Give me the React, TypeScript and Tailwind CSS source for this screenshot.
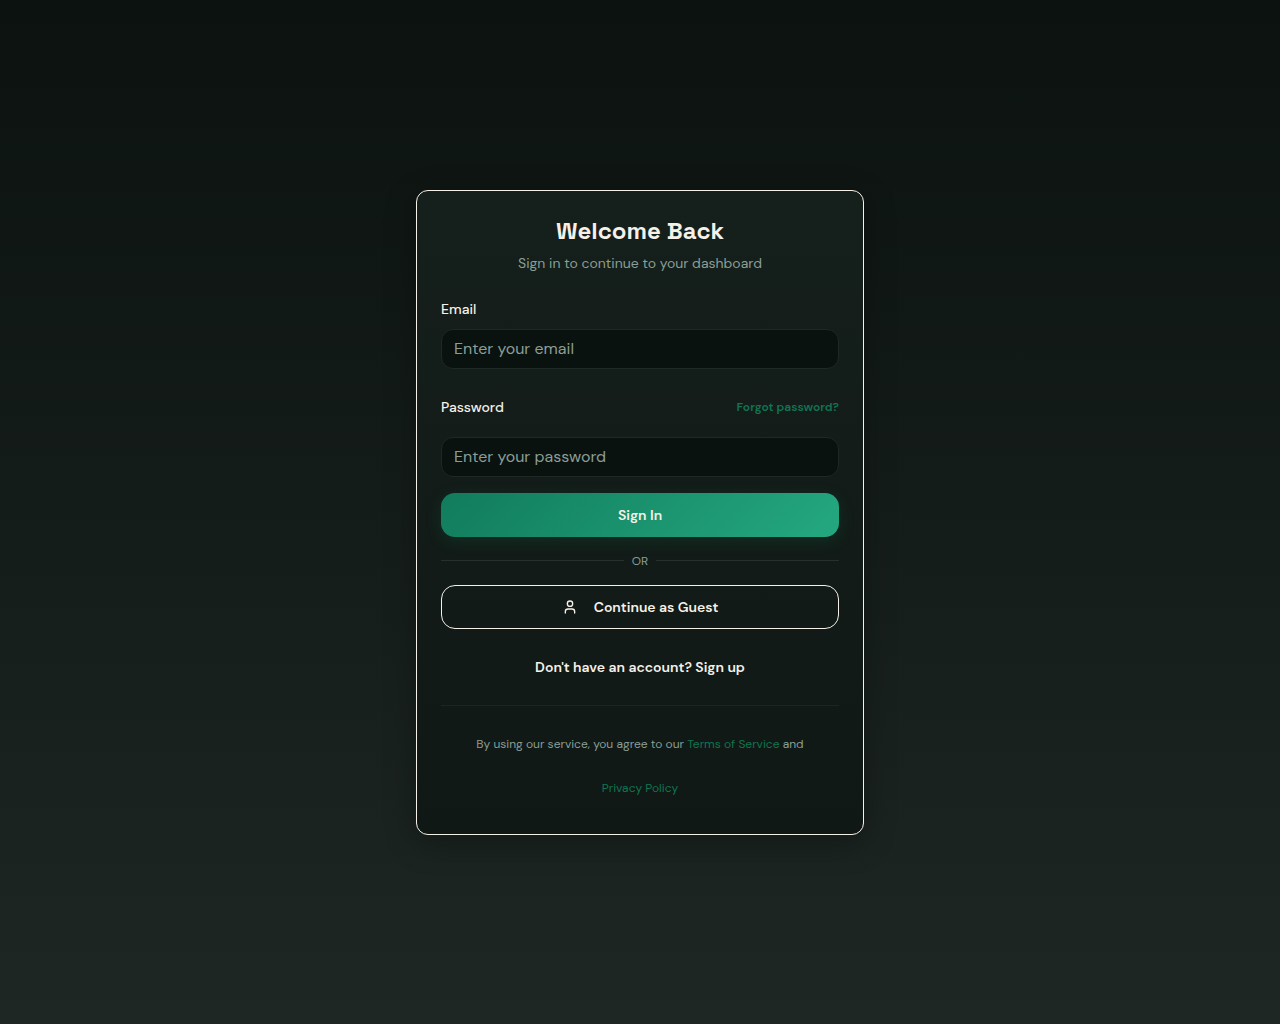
import { useState } from 'react';
import type { FormEvent } from 'react';
import { User } from 'lucide-react';

interface FieldProps {
  id: string;
  type: string;
  placeholder: string;
  value: string;
  onChange: (value: string) => void;
}

function Field({ id, type, placeholder, value, onChange }: FieldProps) {
  return (
    <input
      id={id}
      type={type}
      placeholder={placeholder}
      value={value}
      onChange={(e) => onChange(e.target.value)}
      className="h-10 w-full rounded-xl border border-[#1e2825] bg-[#0a120f] px-3 text-base text-[#f5f0e8] placeholder:text-[#8a9e96] focus:outline-none focus:ring-2 focus:ring-[#117c5c]"
    />
  );
}

export default function App() {
  const [email, setEmail] = useState('');
  const [password, setPassword] = useState('');

  const handleSubmit = (e: FormEvent) => {
    e.preventDefault();
  };

  return (
    <main className="flex min-h-screen items-center justify-center bg-linear-to-b from-[#0b1210] to-[#1e2724] p-4 font-['DM_Sans',Inter,sans-serif] text-[#f5f0e8]">
      <div className="w-full max-w-md rounded-xl border border-[#f5f0e8] bg-linear-to-b from-[#151f1b] to-[#101815] p-6 shadow-[0_8px_32px_rgba(0,0,0,0.3)]">
        <div className="mb-6 flex flex-col gap-1.5 text-center">
          <h1 className="font-['Space_Grotesk',Inter,sans-serif] text-2xl font-bold">Welcome Back</h1>
          <p className="text-sm text-[#8a9e96]">Sign in to continue to your dashboard</p>
        </div>

        <div className="flex flex-col gap-4">
          <form onSubmit={handleSubmit} className="flex flex-col gap-4">
            <div className="flex flex-col gap-2">
              <label htmlFor="email" className="text-sm/6 font-medium">
                Email
              </label>
              <Field id="email" type="email" placeholder="Enter your email" value={email} onChange={setEmail} />
            </div>

            <div className="flex flex-col gap-2">
              <div className="flex h-11 items-center justify-between">
                <label htmlFor="password" className="text-sm font-medium">
                  Password
                </label>
                <a href="#forgot" className="text-xs font-semibold text-[#117452]">
                  Forgot password?
                </a>
              </div>
              <Field
                id="password"
                type="password"
                placeholder="Enter your password"
                value={password}
                onChange={setPassword}
              />
            </div>

            <button
              type="submit"
              className="h-11 w-full rounded-[14px] bg-[linear-gradient(135deg,#117c5c,#24a880)] text-sm font-semibold shadow-[0_4px_16px_rgba(17,124,92,0.2)]"
            >
              Sign In
            </button>
          </form>

          {/* Divider */}
          <div className="flex items-center gap-2 text-xs text-[#8a9e96]">
            <span className="h-px flex-1 bg-[#26312d]" />
            <span>OR</span>
            <span className="h-px flex-1 bg-[#26312d]" />
          </div>

          <button
            type="button"
            className="flex h-11 w-full items-center justify-center gap-4 rounded-[14px] border border-[#f5f0e8] text-sm font-semibold"
          >
            <User className="size-4" />
            Continue as Guest
          </button>

          <button type="button" className="h-11 w-full text-sm font-semibold">
            Don't have an account? Sign up
          </button>

          <p className="border-t border-[#1b2522] px-4 pt-4 text-center text-xs/11 text-[#8a9e96]">
            By using our service, you agree to our{' '}
            <a href="#terms" className="text-[#117452]">
              Terms of Service
            </a>{' '}
            and{' '}
            <a href="#privacy" className="inline-block text-[#117452]">
              Privacy Policy
            </a>
          </p>
        </div>
      </div>
    </main>
  );
}
